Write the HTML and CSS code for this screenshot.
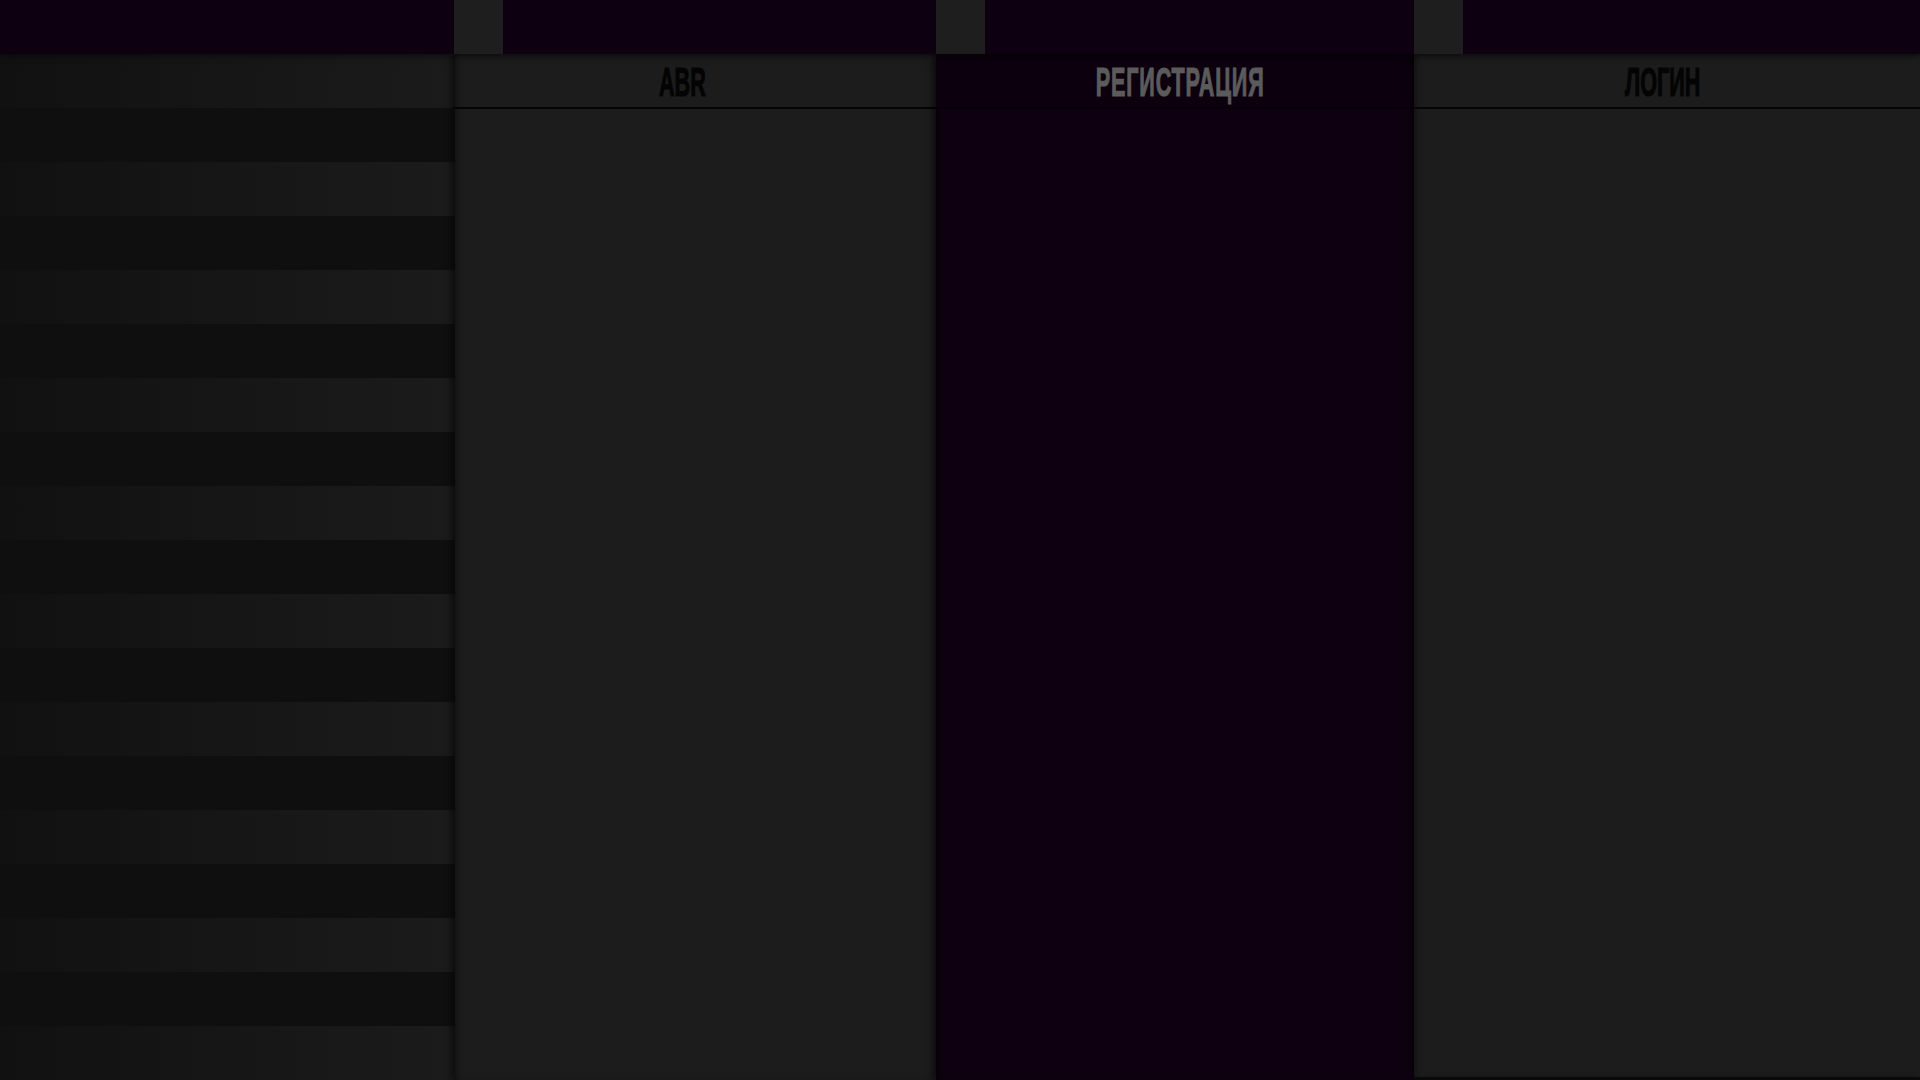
FILE: index.html
```html
<!DOCTYPE html>
<html lang="ru">
<head>
<meta charset="utf-8">
<title>ABR</title>
<link rel="stylesheet" href="styles.css">
</head>
<body>
<div class="app">
  <div class="topbar">
    <div class="top-cell"></div>
    <div class="top-cell"><div class="tab"></div></div>
    <div class="top-cell"><div class="tab"></div></div>
    <div class="top-cell"><div class="tab"></div></div>
  </div>
  <div class="main">
    <aside class="sidebar">
      <div class="row light"></div><div class="row dark"></div>
      <div class="row light"></div><div class="row dark"></div>
      <div class="row light"></div><div class="row dark"></div>
      <div class="row light"></div><div class="row dark"></div>
      <div class="row light"></div><div class="row dark"></div>
      <div class="row light"></div><div class="row dark"></div>
      <div class="row light"></div><div class="row dark"></div>
      <div class="row light"></div><div class="row dark"></div>
      <div class="row light"></div><div class="row dark"></div>
      <div class="row light"></div>
    </aside>
    <section class="col col-abr">
      <header class="col-head"><span class="title">ABR</span></header>
      <div class="col-body"></div>
    </section>
    <section class="col col-reg">
      <header class="col-head"><span class="title">РЕГИСТРАЦИЯ</span></header>
      <div class="col-body"></div>
    </section>
    <section class="col col-login">
      <header class="col-head"><span class="title">ЛОГИН</span></header>
      <div class="col-body"></div>
    </section>
  </div>
</div>
</body>
</html>
```

FILE: styles.css
```css
* { box-sizing: border-box; }
html, body {
  margin: 0;
  padding: 0;
  width: 1920px;
  height: 1080px;
  overflow: hidden;
  background: #0d0d0d;
  font-family: "Liberation Sans", "DejaVu Sans", sans-serif;
}
.app {
  display: flex;
  flex-direction: column;
  height: 1080px;
}
.topbar {
  height: 54px;
  flex: none;
  display: grid;
  grid-template-columns: 454px 482px 478px 1fr;
  background: #0d0011;
  position: relative;
  z-index: 5;
  box-shadow: 0 2px 6px rgba(0, 0, 0, 0.55);
}
.top-cell {
  display: flex;
}
.tab {
  width: 49px;
  height: 54px;
  background: #1e1e1e;
}
.main {
  flex: 1;
  display: grid;
  grid-template-columns: 455px 481px 478px 1fr;
  min-height: 0;
}
.sidebar {
  display: flex;
  flex-direction: column;
}
.row {
  height: 54px;
  flex: none;
}
.row.light {
  background: linear-gradient(to right, #111111 0%, #1b1b1b 100%);
}
.row.dark {
  background: #0f0f0f;
}
.col {
  display: flex;
  flex-direction: column;
  position: relative;
  box-shadow: -3px 0 7px rgba(0, 0, 0, 0.6), inset 4px 0 6px -3px rgba(0, 0, 0, 0.5);
}
.col-abr { background: #1c1c1c; z-index: 1; }
.col-reg { background: #0e0010; z-index: 2; }
.col-login { background: #1c1c1c; z-index: 3; height: 1023px; }
.col-head {
  height: 55px;
  flex: none;
  border-bottom: 2px solid #050505;
  display: flex;
  align-items: center;
  justify-content: center;
  overflow: hidden;
}
.col-abr .col-head { padding-right: 24px; margin-left: -2px; }
.col-reg .col-head { padding-left: 11px; border-bottom-color: #060008; background: #0c000e; }
.col-login .col-head { padding-right: 8px; }
.title {
  display: inline-block;
  font-family: "Liberation Sans", "DejaVu Sans", sans-serif;
  font-weight: bold;
  font-size: 40px;
  line-height: 1;
  letter-spacing: 0;
  transform: scaleX(0.54);
  margin-top: 2px;
  color: #040404;
  -webkit-text-stroke: 1.2px currentColor;
}
.col-reg .title { color: #5b5b5b; letter-spacing: 1.5px; }
.col-body { flex: 1; }
```
